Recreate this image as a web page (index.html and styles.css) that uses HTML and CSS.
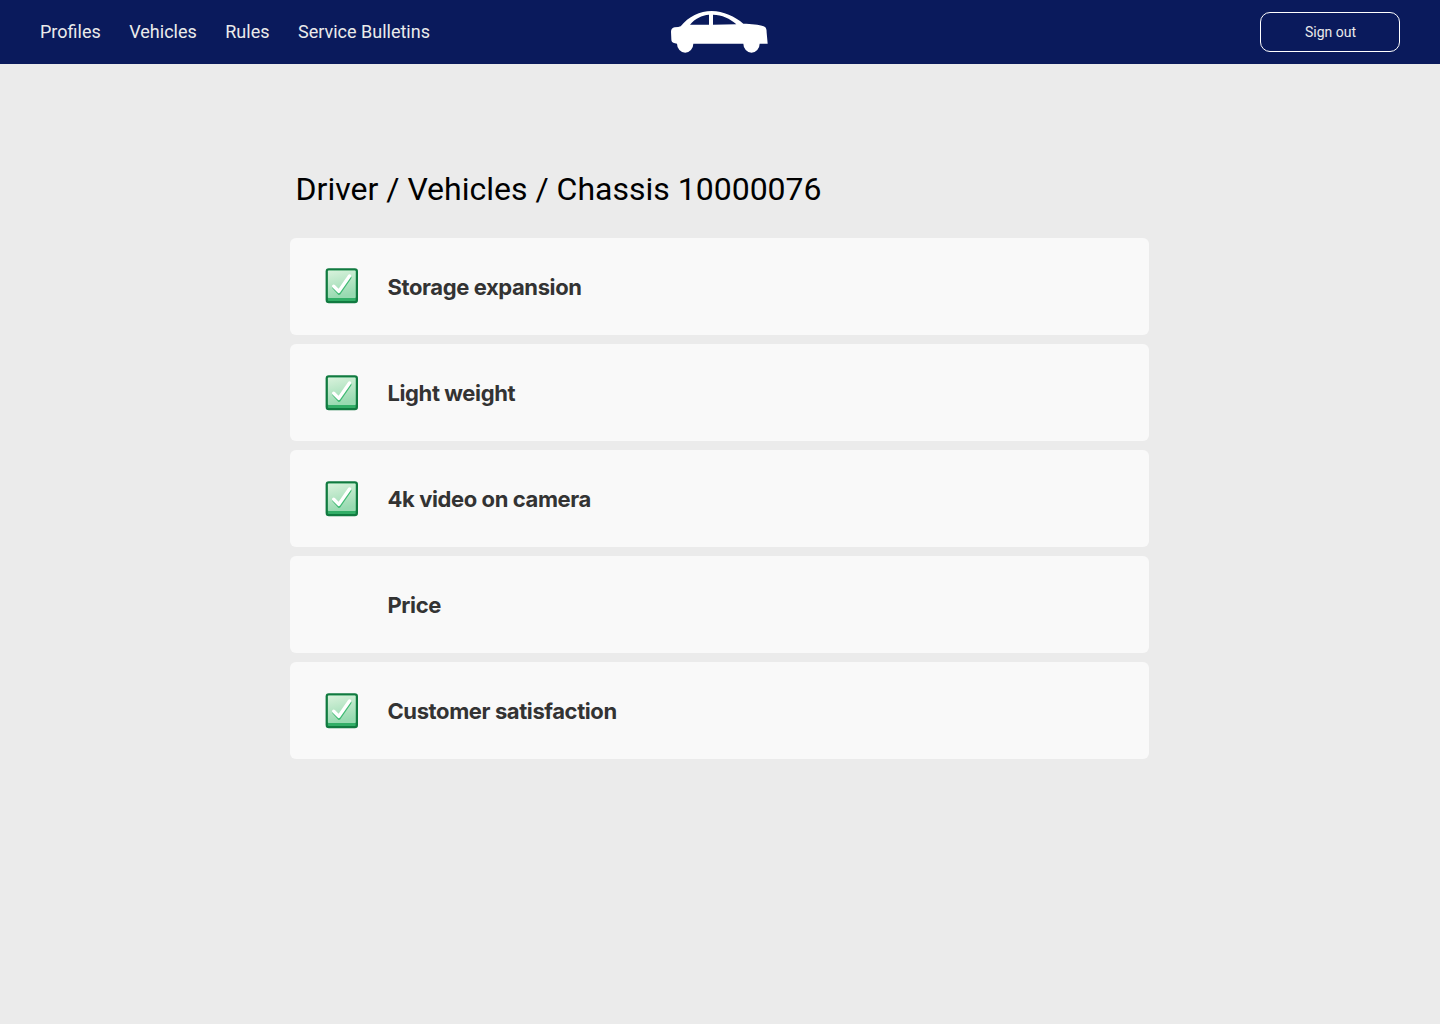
FILE: index.html
```html
<!DOCTYPE html>
<html lang="en">
<head>
<meta charset="utf-8">
<title>Chassis 10000076</title>
<link rel="stylesheet" href="styles.css">
</head>
<body>
<svg class="defs" width="0" height="0" aria-hidden="true">
  <defs>
    <linearGradient id="face" x1="0" y1="0" x2="0.25" y2="1"><stop offset="0" stop-color="#d9f2dc"/><stop offset="1" stop-color="#98dab1"/></linearGradient>
    <symbol id="check" viewBox="0 0 33 36">
      <rect x="0.6" y="0.3" width="32.4" height="34.9" rx="3.2" fill="#117a40"/>
      <rect x="2.9" y="2.6" width="27.8" height="30.4" rx="0.8" fill="#32ae67"/>
      <rect x="2.9" y="2.6" width="27.8" height="27.4" rx="0.8" fill="url(#face)"/>
      <path d="M8.7 19.5L14.1 25.4L25 9.6" fill="none" stroke="#3fba73" stroke-width="3" stroke-linecap="round" stroke-linejoin="round"/>
      <path d="M8.7 18.2L13.8 23.4L24.5 8" fill="none" stroke="#fff" stroke-width="3.4" stroke-linecap="round" stroke-linejoin="round"/>
    </symbol>
  </defs>
</svg>
<header class="topbar">
  <nav class="nav">
    <a>Profiles</a><a>Vehicles</a><a>Rules</a><a>Service Bulletins</a>
  </nav>
  <svg class="logo" viewBox="33 33 291 126" aria-label="Car">
    <path fill="#fff" fill-rule="evenodd" d="M33 95Q33 84 44 82Q56 82 62 79C85 50 120 33 155 33C190 33 225 50 250 71C275 72 300 73 315 81Q320 84 320 98L323 131H299A24.5 27 0 0 1 250 131H100A24.5 27 0 0 1 51 131L42 129Q34 128 34 118ZM90 74H147V44C125 46 106 55 90 74ZM159 44V74L229 73C210 55 186 45 159 44Z"/>
  </svg>
  <button class="signout">Sign out</button>
</header>
<main class="content">
  <h1 class="title">Driver / Vehicles / Chassis 10000076</h1>
  <ul class="list">
    <li class="card first"><svg class="check"><use href="#check"/></svg><span class="label">Storage expansion</span></li>
    <li class="card"><svg class="check"><use href="#check"/></svg><span class="label">Light weight</span></li>
    <li class="card"><svg class="check"><use href="#check"/></svg><span class="label">4k video on camera</span></li>
    <li class="card"><span class="check"></span><span class="label">Price</span></li>
    <li class="card"><svg class="check"><use href="#check"/></svg><span class="label">Customer satisfaction</span></li>
  </ul>
</main>
</body>
</html>
```
FILE: styles.css
```css
* { box-sizing: border-box; }
body { margin: 0; min-height: 1022px; background: #ebebeb; font-family: Roboto, sans-serif; }
.defs { display: block; }
.topbar { display: grid; grid-template-columns: 631px 97px 1fr; align-items: center; height: 64px; padding: 0 40px; background: #0a1a5c; }
.nav { display: flex; gap: 28.5px; color: #ebebeb; font-size: 18px; line-height: 24px; white-space: nowrap; }
.logo { display: block; width: 97px; height: 42px; }
.signout { justify-self: end; width: 140px; height: 40px; padding: 0 0 0 1px; border: 1px solid #fff; border-radius: 10px; background: none; color: #ebebeb; font: 14px/20px Roboto, sans-serif; }
.content { width: 859px; margin: 0 auto 0 290px; padding-top: 105px; }
.title { margin: 0; padding-left: 5.6px; color: #000; font-size: 32px; font-weight: 400; line-height: 40px; }
.list { display: grid; gap: 9px; margin: 29px 0 0; padding: 0; list-style: none; }
.card { display: flex; align-items: flex-start; height: 97px; padding: 31px 0 0 35px; border-radius: 6px; background: #f9f9f9; }
.check { flex: none; width: 33px; height: 36px; }
.first .check { margin-top: -1px; }
.label { margin: 3px 0 0 29.5px; color: #333; font: 700 22px/30px Inter, sans-serif; letter-spacing: -0.4px; }
```
